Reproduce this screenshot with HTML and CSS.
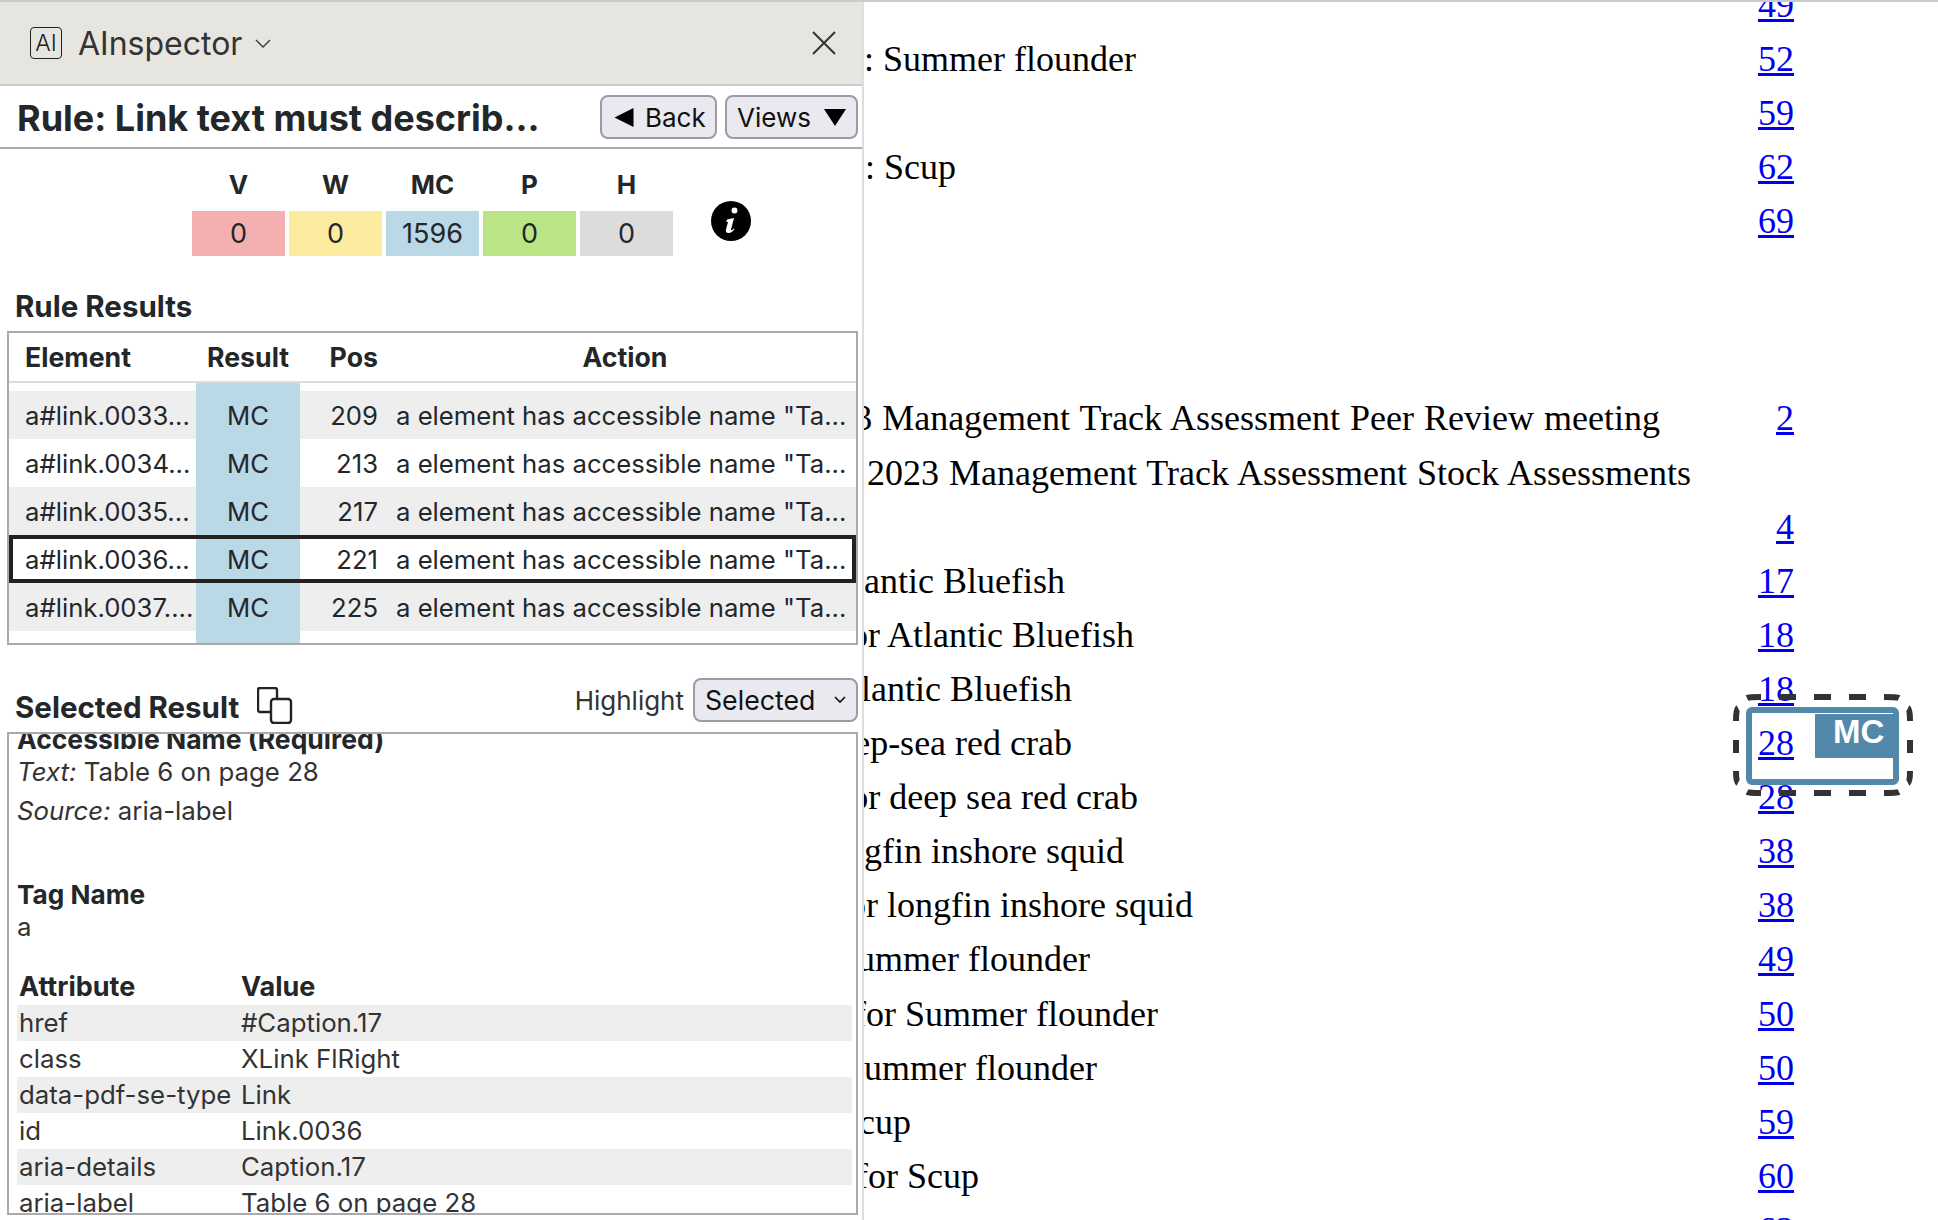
FILE: index.html
```html
<!DOCTYPE html>
<html lang="en">
<head>
<meta charset="utf-8">
<title>AInspector</title>
<link rel="stylesheet" href="styles.css">
</head>
<body>
<div class="app">
  <aside class="sidebar">
    <header class="titlebar">
      <span class="logo">AI</span>
      <span class="appname">AInspector</span>
      <svg class="chev" viewBox="0 0 16 9"><path d="M1 1l7 7 7-7"/></svg>
      <svg class="close" viewBox="0 0 24 24"><path d="M1 1l22 22M23 1L1 23"/></svg>
    </header>
    <div class="rulebar">
      <h1 class="ruletitle">Rule: Link text must describ...</h1>
      <button class="btn btn-back"><svg class="tri-left" viewBox="0 0 20 20"><path d="M0 10L20 0v20z"/></svg>Back</button>
      <button class="btn btn-views">Views<svg class="tri-down" viewBox="0 0 22 17"><path d="M0 0h22L11 17z"/></svg></button>
    </div>
    <section class="summary">
      <div class="sumgrid">
        <div class="sumhead">V</div><div class="sumhead">W</div><div class="sumhead">MC</div><div class="sumhead">P</div><div class="sumhead">H</div>
        <div class="sumval v">0</div><div class="sumval w">0</div><div class="sumval mc">1596</div><div class="sumval p">0</div><div class="sumval h">0</div>
      </div>
      <svg class="info" viewBox="0 0 40 40"><circle cx="20" cy="20" r="20"/><path class="info-i" d="M20.5 9.5a3 3 0 1 1 6 0a3 3 0 0 1-6 0zM16 18.5l7-1.5-3 11.5c-.2.8.6 1 1.2.5l1.8-1.5.6.8c-2 2.4-3.6 3.7-6 3.7-2.2 0-3.2-1.3-2.6-3.6l2-7.5-1.6.2z"/></svg>
    </section>
    <h2 class="sectitle results-title">Rule Results</h2>
    <div class="tablebox">
      <table class="results">
        <colgroup><col class="c-el"><col class="c-res"><col class="c-pos"><col class="c-act"></colgroup>
        <thead><tr><th class="el">Element</th><th class="res">Result</th><th class="pos">Pos</th><th class="act">Action</th></tr></thead>
        <tbody>
          <tr class="spacer"><td></td><td class="res"></td><td></td><td></td></tr>
          <tr class="odd"><td class="el">a#link.0033...</td><td class="res">MC</td><td class="pos">209</td><td class="act">a element has accessible name "Ta...</td></tr>
          <tr><td class="el">a#link.0034...</td><td class="res">MC</td><td class="pos">213</td><td class="act">a element has accessible name "Ta...</td></tr>
          <tr class="odd"><td class="el">a#link.0035...</td><td class="res">MC</td><td class="pos">217</td><td class="act">a element has accessible name "Ta...</td></tr>
          <tr class="sel"><td class="el">a#link.0036...</td><td class="res">MC</td><td class="pos">221</td><td class="act">a element has accessible name "Ta...</td></tr>
          <tr class="odd"><td class="el">a#link.0037....</td><td class="res">MC</td><td class="pos">225</td><td class="act">a element has accessible name "Ta...</td></tr>
          <tr class="filler"><td></td><td class="res"></td><td></td><td></td></tr>
        </tbody>
      </table>
    </div>
    <div class="selhead">
      <h2 class="sectitle">Selected Result</h2>
      <svg class="copy" viewBox="0 0 36 37"><path d="M13 25H3a2 2 0 0 1-2-2V3a2 2 0 0 1 2-2h15a2 2 0 0 1 2 2v8"/><rect x="14" y="12" width="20" height="24" rx="3"/></svg>
      <span class="hl-label">Highlight</span>
      <div class="select"><span>Selected</span><svg class="sel-chev" viewBox="0 0 12 8"><path d="M1 1l5 5 5-5"/></svg></div>
    </div>
    <div class="detail">
      <div class="detail-inner">
        <div class="d-h">Accessible Name (Required)</div>
        <div class="d-t"><em>Text:</em> Table 6 on page 28</div>
        <div class="d-s"><em>Source:</em> aria-label</div>
        <div class="d-h d-tag">Tag Name</div>
        <div class="d-a">a</div>
        <table class="attrs">
          <thead><tr><th>Attribute</th><th>Value</th></tr></thead>
          <tbody>
            <tr class="odd"><td>href</td><td>#Caption.17</td></tr>
            <tr><td>class</td><td>XLink FlRight</td></tr>
            <tr class="odd"><td>data-pdf-se-type</td><td>Link</td></tr>
            <tr><td>id</td><td>Link.0036</td></tr>
            <tr class="odd"><td>aria-details</td><td>Caption.17</td></tr>
            <tr><td>aria-label</td><td>Table 6 on page 28</td></tr>
          </tbody>
        </table>
      </div>
    </div>
  </aside>
  <main class="page">
    <div class="toc">
      <div class="row"><a href="#p">49</a></div>
      <div class="row"><span class="lab e1136"><span>: Summer flounder</span></span><a href="#p">52</a></div>
      <div class="row"><a href="#p">59</a></div>
      <div class="row"><span class="lab e956"><span>: Scup</span></span><a href="#p">62</a></div>
      <div class="row"><a href="#p">69</a></div>
      <div class="row group"><span class="lab long e1660"><span>3 Management Track Assessment Peer Review meeting</span></span><a href="#p">2</a></div>
      <div class="row"><span class="lab long e1691"><span>2023 Management Track Assessment Stock Assessments</span></span></div>
      <div class="row"><a href="#p">4</a></div>
      <div class="row"><span class="lab e1065"><span>tlantic Bluefish</span></span><a href="#p">17</a></div>
      <div class="row"><span class="lab e1134"><span>or Atlantic Bluefish</span></span><a href="#p">18</a></div>
      <div class="row"><span class="lab e1072"><span>lantic Bluefish</span></span><a href="#p">18</a></div>
      <div class="row"><span class="lab e1072"><span>eep-sea red crab</span></span><a href="#p">28</a></div>
      <div class="row"><span class="lab e1138"><span>or deep sea red crab</span></span><a href="#p">28</a></div>
      <div class="row"><span class="lab e1124"><span>ngfin inshore squid</span></span><a href="#p">38</a></div>
      <div class="row"><span class="lab e1193"><span>or longfin inshore squid</span></span><a href="#p">38</a></div>
      <div class="row"><span class="lab e1090"><span>ummer flounder</span></span><a href="#p">49</a></div>
      <div class="row"><span class="lab e1158"><span>for Summer flounder</span></span><a href="#p">50</a></div>
      <div class="row"><span class="lab e1097"><span>ummer flounder</span></span><a href="#p">50</a></div>
      <div class="row"><span class="lab e911"><span>cup</span></span><a href="#p">59</a></div>
      <div class="row"><span class="lab e979"><span>for Scup</span></span><a href="#p">60</a></div>
      <div class="row"><a href="#p">63</a></div>
    </div>
    <div class="marker">
      <span class="marker-label">MC</span>
    </div>
    <svg class="dashes" viewBox="0 0 186 110"><path d="M17 8Q19 7 31 7M49 7H66M84 7H101M119 7H136M154 7Q167 7 169 8M17 102Q19 103 31 103M49 103H66M84 103H101M119 103H136M154 103Q167 103 169 102M8 18Q6 19 6 31M6 50V63M6 81Q6 92 8 93M178 18Q180 19 180 31M180 50V63M180 81Q180 92 178 93"/></svg>
  </main>
</div>
</body>
</html>
```
FILE: styles.css
```css
* { box-sizing: border-box; }
html, body { margin: 0; height: 100%; overflow: hidden; background: #fff; }
body { font-family: Inter, "Liberation Sans", sans-serif; color: #24272a; }

.app { display: flex; height: 1220px; border-top: 2px solid #cbcbc9; }

/* sidebar */
.sidebar { width: 864px; flex: none; display: flex; flex-direction: column; border-right: 2px solid #dedede; background: #fff; position: relative; z-index: 2; overflow: hidden; }
.titlebar { height: 84px; flex: none; background: #e7e5e0; border-bottom: 2px solid #cdcbc7; display: flex; align-items: center; padding-left: 30px; }
.logo { width: 32px; height: 32px; border: 1.5px solid #222; border-radius: 4px; font-size: 23px; font-weight: 300; display: flex; align-items: center; justify-content: center; color: #222; }
.appname { margin-left: 16px; font-size: 32px; font-weight: 400; color: #333; }
.chev { width: 16px; height: 9px; margin-left: 13px; fill: none; stroke: #444; stroke-width: 1.5; }
.close { width: 24px; height: 24px; margin-left: auto; margin-right: 26px; fill: none; stroke: #333; stroke-width: 2; }

.rulebar { height: 63px; flex: none; border-bottom: 2px solid #aaa; display: flex; align-items: center; padding: 0 4px 0 17px; }
.ruletitle { margin: 0; padding-top: 2px; font-size: 36px; font-weight: 700; flex: 1; color: #24272a; white-space: nowrap; }
.btn { height: 44px; border: 2px solid #9b9aa6; border-radius: 8px; background: #e9e9ef; font: 400 26px Inter, sans-serif; color: #111; display: flex; align-items: center; padding: 2px 0 0; }
.btn-back { width: 117px; padding-left: 12px; }
.btn-views { width: 133px; margin-left: 8px; padding-left: 10px; }
.tri-left { width: 20px; height: 19px; margin-right: 11px; fill: #000; }
.tri-down { width: 22px; height: 17px; margin-left: 13px; fill: #000; }

.summary { display: flex; padding: 20px 0 0 192px; height: 112px; flex: none; }
.sumgrid { display: grid; grid-template-columns: repeat(5, 93px); grid-template-rows: 42px 45px; column-gap: 4px; }
.sumhead { font-size: 26px; font-weight: 700; text-align: center; line-height: 32px; }
.sumval { font-size: 27px; text-align: center; line-height: 45px; }
.sumval.v { background: #f4b0b0; }
.sumval.w { background: #fcec9f; }
.sumval.mc { background: #bad8e6; }
.sumval.p { background: #bbe585; }
.sumval.h { background: #dcdcdc; }
.info { width: 40px; height: 40px; margin: 32px 0 0 38px; fill: #000; }
.info-i { fill: #fff; }

.sectitle { margin: 0; font-size: 29.5px; font-weight: 700; line-height: 34px; color: #24272a; }
.results-title { margin: 28px 0 0 15px; flex: none; }

.tablebox { margin: 8px 4px 0 7px; height: 314px; flex: none; border: 2px solid #aaa; overflow: hidden; }
.results { width: 100%; border-collapse: separate; border-spacing: 0; table-layout: fixed; font-size: 25.7px; }
.c-el { width: 187px; }
.c-res { width: 104px; }
.c-pos { width: 90px; }
.results th { height: 50px; padding: 0; font-size: 26.7px; font-weight: 700; border-bottom: 2px solid #dcdcdc; }
.results td { height: 48px; padding: 0; white-space: nowrap; overflow: hidden; }
.results .el { padding-left: 16px; text-align: left; }
.results .res { text-align: center; }
.results .pos { text-align: right; padding-right: 12px; }
.results .act { padding-left: 6px; }
.results th.act { text-align: center; padding: 0 0 0 4px; }
.results tbody .res { background: #bad8e6; }
.results .spacer td { height: 8px; }
.results .filler td { height: 14px; }
.results .odd td { background: #eee; }
.results .odd td.res { background: #bad8e6; }
.results .sel { outline: 4px solid #222; outline-offset: -4px; }

.selhead { height: 44px; flex: none; margin: 33px 4px 0 15px; display: flex; align-items: center; }
.selhead .sectitle { padding-top: 13px; line-height: 44px; }
.copy { width: 36px; height: 37px; margin: 11px 0 0 18px; fill: none; stroke: #222; stroke-width: 2.4; }
.hl-label { margin-left: auto; font-size: 26px; color: #333; }
.select { width: 165px; height: 44px; margin-left: 9px; border: 2px solid #9b9aa6; border-radius: 8px; background: #e9e9ef; font-size: 26.7px; color: #111; display: flex; align-items: center; justify-content: space-between; padding: 0 10px; }
.sel-chev { width: 12px; height: 8px; fill: none; stroke: #111; stroke-width: 1.6; }

.detail { margin: 10px 4px 0 7px; height: 483px; flex: none; border: 2px solid #aaa; overflow: hidden; }
.detail-inner { margin-top: -11px; padding: 0 4px 0 8px; font-size: 25.8px; line-height: 32px; }
.d-h { font-size: 26.5px; font-weight: 700; color: #24272a; }
.d-t { margin-top: 1px; color: #333; }
.d-s { margin-top: 7px; color: #333; }
.d-tag { margin-top: 52px; font-size: 26.2px; }
.d-a { color: #333; }
.attrs { margin: 26px 0 0 0; width: 835px; border-collapse: collapse; table-layout: fixed; color: #333; }
.attrs th { text-align: left; font-size: 27px; font-weight: 700; height: 36px; padding: 0 0 0 2px; color: #24272a; }
.attrs th:first-child { width: 222px; }
.attrs td { height: 36px; padding: 0 0 0 2px; white-space: nowrap; }
.attrs .odd td { background: #eee; }

/* document */
.page { flex: 1; min-width: 0; position: relative; overflow: hidden; font-family: "Liberation Serif", serif; color: #000; }
.toc { margin-top: -24px; padding-right: 144px; }
.row { height: 54.1px; line-height: 54.1px; font-size: 36px; display: flex; white-space: nowrap; }
.row a { margin-left: auto; color: #00e; text-decoration: underline; }
.group { margin-top: 143px; }
.lab { display: flex; justify-content: flex-end; flex: none; }
.lab span { flex: none; }
.long { word-spacing: 1px; }
.e1136 { width: 272px; }
.e956 { width: 92px; }
.e1660 { width: 796px; }
.e1691 { width: 827px; }
.e1065 { width: 201px; }
.e1134 { width: 270px; }
.e1072 { width: 208px; }
.e1138 { width: 274px; }
.e1124 { width: 260px; }
.e1193 { width: 329px; }
.e1090 { width: 226px; }
.e1158 { width: 294px; }
.e1097 { width: 233px; }
.e911 { width: 47px; }
.e979 { width: 115px; }

.marker { position: absolute; left: 882px; top: 705px; width: 153px; height: 78px; border: 6px solid #5288a9; border-radius: 6px; }
.marker-label { position: absolute; right: 0; top: 1px; width: 78px; height: 44px; background: #5288a9; color: #fff; font: 700 33px/36px "Liberation Sans", sans-serif; padding-left: 18px; }
.dashes { position: absolute; left: 866px; top: 688px; width: 186px; height: 110px; fill: none; stroke: #333; stroke-width: 6; }
```
